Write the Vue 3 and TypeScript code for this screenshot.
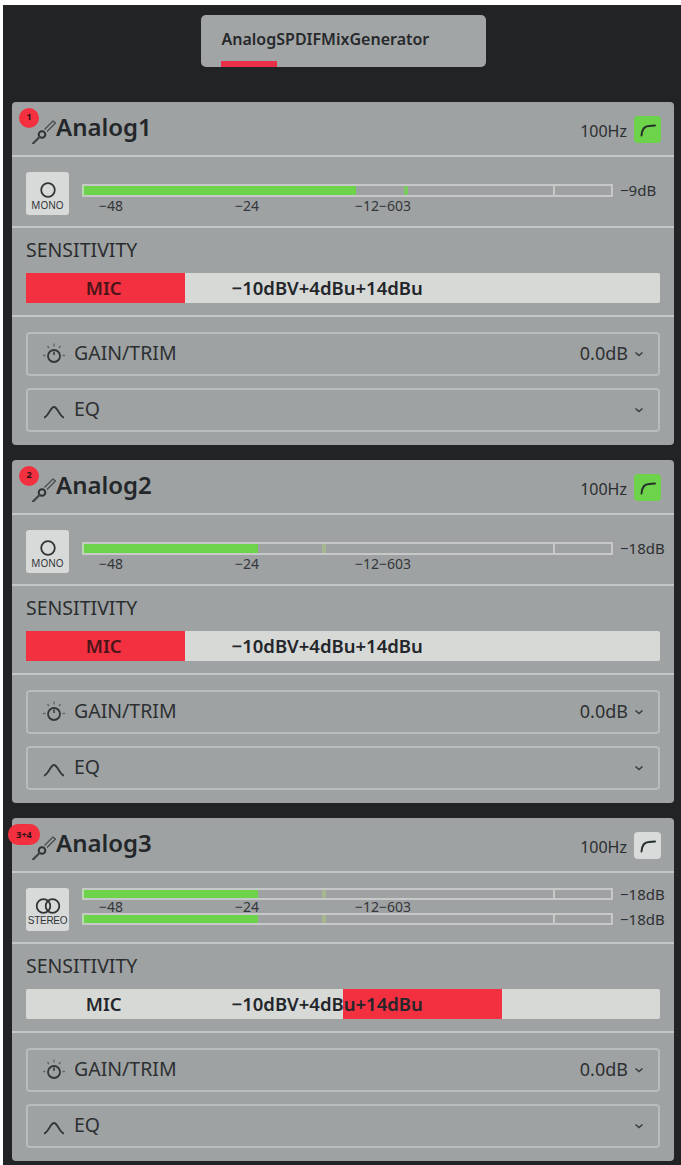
<script setup lang="ts">
interface Channel {
  name: string;
  badge: string;
  wide: boolean;
  stereo: boolean;
  hpf: boolean;
  levels: { fill: number; peak: number; lit: boolean; db: string }[];
  selected: number;
}

const channels: Channel[] = [
  { name: 'Analog1', badge: '1', wide: false, stereo: false, hpf: true, selected: 1, levels: [{ fill: 272, peak: 320, lit: true, db: '−9dB' }] },
  { name: 'Analog2', badge: '2', wide: false, stereo: false, hpf: true, selected: 1, levels: [{ fill: 174, peak: 238, lit: false, db: '−18dB' }] },
  {
    name: 'Analog3', badge: '3+4', wide: true, stereo: true, hpf: false, selected: 3,
    levels: [{ fill: 174, peak: 238, lit: false, db: '−18dB' }, { fill: 174, peak: 238, lit: false, db: '−18dB' }],
  },
];
</script>

<template>
  <div class="page">
    <div class="tabs">
      <div class="tab">
        <span class="tab-label">AnalogSPDIFMixGenerator</span>
        <span class="tab-mark"></span>
      </div>
    </div>

    <section v-for="c in channels" :key="c.name" class="card">
      <header class="head">
        <span class="badge" :class="{ wide: c.wide }">{{ c.badge }}</span>
        <svg class="jack" viewBox="0 0 24 24" width="24" height="24">
          <path d="M12.500 9.500 L21 1 L23.500 3 L15 11.500" fill="none" stroke="#4a4d4f" stroke-width="1.300" stroke-linejoin="round" />
          <circle cx="10" cy="14.500" r="3.300" fill="none" stroke="#2f3336" stroke-width="2" />
          <path d="M7.500 17 L1 23.500" stroke="#3c4447" stroke-width="2.200" stroke-linecap="round" />
        </svg>
        <h2 class="title">{{ c.name }}</h2>
        <span class="hz">100Hz</span>
        <span class="hpf" :class="{ on: c.hpf }">
          <svg viewBox="0 0 18 14" width="18" height="14">
            <path d="M2.500 12.500 C3 6 6 3 10 3 L16 2.500" fill="none" stroke="#26302a" stroke-width="2" stroke-linecap="round" />
          </svg>
        </span>
      </header>

      <div class="meter-row">
        <div class="mode">
          <svg v-if="!c.stereo" class="mode-icon" viewBox="0 0 16 16" width="16" height="16">
            <circle cx="8" cy="8" r="6.800" fill="none" stroke="#333" stroke-width="1.800" />
          </svg>
          <svg v-else class="mode-icon" viewBox="0 0 28 16" width="28" height="16">
            <circle cx="9.500" cy="8" r="6.800" fill="none" stroke="#333" stroke-width="1.800" />
            <circle cx="18.500" cy="8" r="6.800" fill="none" stroke="#333" stroke-width="1.800" />
          </svg>
          <span class="mode-label" :class="{ narrow: c.stereo }">{{ c.stereo ? 'STEREO' : 'MONO' }}</span>
        </div>

        <div class="meters" :class="{ stereo: c.stereo }">
          <template v-for="(l, i) in c.levels" :key="i">
            <div class="meter">
              <span class="fill" :style="{ width: l.fill + 'px' }"></span>
              <span class="peak" :class="{ lit: l.lit }" :style="{ left: l.peak + 'px' }"></span>
              <span class="tick"></span>
            </div>
            <span class="db">{{ l.db }}</span>
            <div v-if="i === 0" class="scale">
              <span>−48</span><span>−24</span><span>−12−603</span>
            </div>
          </template>
        </div>
      </div>

      <div class="sens">
        <div class="sens-title">SENSITIVITY</div>
        <div class="seg">
          <span class="seg-mark" :style="{ gridColumn: c.selected }"></span>
          <span class="seg-mic" :class="{ active: c.selected === 1 }">MIC</span>
          <span class="seg-rest">−10dBV+4dBu+14dBu</span>
        </div>
      </div>

      <div class="rows">
        <div class="row">
          <svg class="row-icon gain" viewBox="0 0 24 22" width="24" height="22">
            <circle cx="12" cy="14" r="6" fill="none" stroke="#33373a" stroke-width="1.800" />
            <path d="M12 9.500 V13" stroke="#33373a" stroke-width="1.500" />
            <path d="M12 1.500 V4.500 M5.500 4 L7 6.200 M18.500 4 L17 6.200 M1 13.500 H3.500 M20.500 13.500 H23" stroke="#63676a" stroke-width="1.400" />
          </svg>
          <span class="row-label up-small">GAIN/TRIM</span>
          <span class="row-value">0.0dB</span>
          <svg class="chev" viewBox="0 0 10 6" width="10" height="6">
            <path d="M1.500 1.500 L5 4.500 L8.500 1.500" fill="none" stroke="#3b3e40" stroke-width="1.600" />
          </svg>
        </div>
        <div class="row">
          <svg class="row-icon" viewBox="0 0 24 22" width="24" height="22">
            <path d="M2 18.500 C6 18 8.500 8 12 8 C15.500 8 18 18 22 18.500" fill="none" stroke="#33373a" stroke-width="1.800" />
          </svg>
          <span class="row-label up">EQ</span>
          <svg class="chev" viewBox="0 0 10 6" width="10" height="6">
            <path d="M1.500 1.500 L5 4.500 L8.500 1.500" fill="none" stroke="#3b3e40" stroke-width="1.600" />
          </svg>
        </div>
      </div>
    </section>
  </div>
</template>

<style>
html, body { background: #fff; }
</style>

<style scoped>
.page {
  margin: 5px 0 0 3px;
  height: 1160px;
  box-sizing: border-box;
  padding: 10px 7px 0 9px;
  background: #222324;
  overflow: hidden;
  font-family: "Noto Sans", "Open Sans", sans-serif;
  color: #26292b;
}
.tabs {
  display: flex;
  justify-content: center;
  height: 52px;
  margin-bottom: 35px;
}
.tab {
  width: 285px;
  box-sizing: border-box;
  background: #a2a5a6;
  border-radius: 5px;
  padding: 0 20px;
  display: flex;
  flex-direction: column;
  justify-content: space-between;
}
.tab-label {
  margin-top: 14px;
  margin-left: 1px;
  font-size: 16px;
  line-height: 20px;
  font-weight: 600;
  white-space: nowrap;
}
.tab-mark {
  width: 56px;
  height: 6px;
  background: #e8304a;
}
.card {
  position: relative;
  height: 343px;
  margin-bottom: 15px;
  background: #9fa2a3;
  border-radius: 4px;
  display: flex;
  flex-direction: column;
}
.head {
  height: 55px;
  box-sizing: border-box;
  flex: none;
  display: flex;
  align-items: center;
  padding: 0 13px 0 20px;
  border-bottom: 2px solid #c3c6c6;
}
.badge {
  position: absolute;
  left: 7px;
  top: 6px;
  width: 20px;
  height: 20px;
  border-radius: 10px;
  background: #f2303f;
  color: #2a1014;
  font-size: 9px;
  font-weight: 700;
  display: flex;
  align-items: center;
  justify-content: center;
  padding-bottom: 4px;
  box-sizing: border-box;
}
.badge.wide {
  left: -4px;
  width: 32px;
  height: 21px;
  padding-bottom: 0;
}
.jack { flex: none; margin-top: 6px; }
.title {
  margin: -3px 0 0;
  font-size: 24px;
  line-height: 32px;
  font-weight: 600;
  flex: 1;
  color: #24272a;
}
.hz { font-size: 16px; margin-right: 7px; margin-top: 4px; color: #2b2e30; }
.hpf {
  width: 27px;
  height: 27px;
  border-radius: 4px;
  background: #d9dbda;
  display: flex;
  align-items: center;
  justify-content: center;
  margin-top: 2px;
}
.hpf.on { background: #6dd34b; }
.meter-row {
  height: 71px;
  flex: none;
  box-sizing: border-box;
  border-bottom: 2px solid #c3c6c6;
  display: flex;
  align-items: flex-start;
  padding: 15px 0 0 14px;
}
.mode {
  width: 43px;
  height: 43px;
  flex: none;
  border-radius: 3px;
  background: #d8dad9;
  display: flex;
  flex-direction: column;
  align-items: center;
  justify-content: flex-end;
  padding-bottom: 4px;
  box-sizing: border-box;
}
.mode-icon { margin-bottom: 1px; }
.mode-label { font-size: 10px; line-height: 12px; color: #33363a; }
.mode-label.narrow { font-family: "Liberation Sans", sans-serif; letter-spacing: -0.3px; }
.meters {
  margin-left: 13px;
  margin-top: 12px;
  display: grid;
  grid-template-columns: 531px auto;
  grid-template-rows: 13px 18px;
  column-gap: 7px;
  align-items: center;
}
.meters.stereo { margin-top: 0; grid-template-rows: 12px 13px 12px; }
.meter {
  position: relative;
  height: 100%;
  box-sizing: border-box;
  border: 2px solid #c6c9c8;
  border-left-color: #b9d9ae;
  border-radius: 1px;
  grid-column: 1;
}
.fill {
  display: block;
  height: 100%;
  background: #6dd34b;
}
.peak {
  position: absolute;
  top: 0;
  bottom: 0;
  width: 4px;
  background: #a6b68f;
}
.peak.lit { background: #7acb5d; }
.tick {
  position: absolute;
  left: 469px;
  top: 0;
  bottom: 0;
  width: 2px;
  background: #c6c9c8;
}
.db { font-size: 15px; line-height: 13px; color: #2e3133; white-space: nowrap; }
.scale {
  grid-column: 1;
  display: grid;
  grid-template-columns: 136px 120px auto;
  justify-content: start;
  padding-left: 17px;
  font-size: 14px;
  line-height: 14px;
  color: #33363a;
}
.sens {
  height: 89px;
  flex: none;
  box-sizing: border-box;
  padding: 0 14px;
  border-bottom: 2px solid #c3c6c6;
}
.sens-title {
  margin-top: 9px;
  height: 26px;
  font-size: 19.500px;
  line-height: 26px;
  color: #2a2d2f;
}
.seg {
  margin-top: 10px;
  height: 30px;
  display: grid;
  grid-template-columns: repeat(4, 1fr);
  grid-template-rows: 30px;
  background: #d7d9d7;
  border-radius: 2px;
  font-size: 18.500px;
  line-height: 30px;
  font-weight: 600;
  color: #23262a;
  white-space: nowrap;
}
.seg-mark {
  grid-row: 1;
  background: #f2303f;
}
.seg-mic {
  grid-row: 1;
  grid-column: 1;
  text-align: center;
  padding-right: 3px;
  z-index: 1;
}
.seg-mic.active { color: #4a1519; }
.seg-rest {
  grid-row: 1;
  grid-column: 2 / 5;
  padding-left: 47px;
  z-index: 1;
}
.rows {
  padding: 15px 14px 0;
  display: flex;
  flex-direction: column;
  gap: 12px;
}
.row {
  height: 44px;
  box-sizing: border-box;
  border: 2px solid #b9bcbc;
  border-radius: 4px;
  display: flex;
  align-items: center;
  padding: 0 14px;
}
.row-icon { flex: none; margin-right: 8px; }
.row-icon.gain { margin-top: -2px; }
.row-label { flex: 1; font-size: 19.500px; color: #2d3032; }
.row-label.up { margin-top: -3px; }
.row-label.up-small { margin-top: -4px; }
.row-value { font-size: 18px; color: #2d3032; margin-right: 6px; margin-top: -2px; }
.chev { flex: none; }
</style>
